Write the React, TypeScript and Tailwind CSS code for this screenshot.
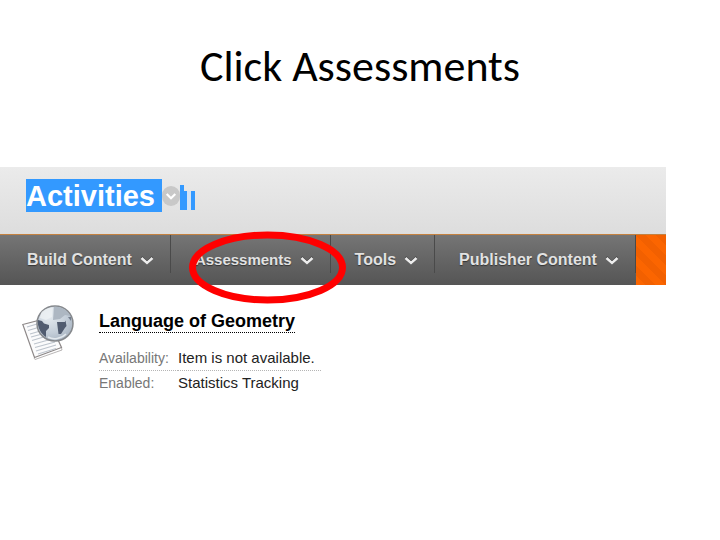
const menus = [
  { name: 'Build Content', size: 'text-base' },
  { name: 'Assessments', size: 'text-[15px]' },
  { name: 'Tools', size: 'text-base' },
  { name: 'Publisher Content', size: 'text-base' },
]

const details = [
  { label: 'Availability:', value: 'Item is not available.' },
  { label: 'Enabled:', value: 'Statistics Tracking' },
]

function Chevron() {
  return (
    <svg viewBox="0 0 14 12" className="h-3 w-[14px] shrink-0" fill="none" aria-hidden="true">
      <path d="M1.5 3 L7 8 L12.5 3" stroke="#3d3d3d" strokeWidth="2" />
      <path d="M1.5 4 L7 9 L12.5 4" stroke="#ededed" strokeWidth="2.4" />
    </svg>
  )
}

// Hand-drawn style ring around the Assessments menu
function Ring() {
  return (
    <svg
      viewBox="0 0 158 73"
      className="pointer-events-none absolute -top-1 left-[18px] z-10 h-[73px] w-[158px]"
      fill="none"
      aria-hidden="true"
    >
      <ellipse cx="78.5" cy="36.5" rx="75" ry="32.5" stroke="#ff0000" strokeWidth="7" />
    </svg>
  )
}

function GlobeIcon() {
  return (
    <svg viewBox="0 0 54 56" className="h-14 w-[54px] shrink-0" fill="none" aria-hidden="true">
      <defs>
        <radialGradient id="globe" cx="0.35" cy="0.3" r="0.8">
          <stop offset="0" stopColor="#e4eaef" />
          <stop offset="0.6" stopColor="#c3cdd8" />
          <stop offset="1" stopColor="#a3afbd" />
        </radialGradient>
      </defs>
      <path d="M0.8 19.5 L26 13 L39.5 42.5 L12.5 52.5 Z" fill="#fbfbfc" stroke="#8d8888" strokeWidth="1.2" />
      <path d="M39.5 43 L40 45 L13 54.5 L12 53" stroke="#b9b6b6" strokeWidth="1" />
      <path
        d="M5 22 L15 19 M6 25.5 L18 22 M8 29 L20 25.5 M9 32 L22 28.5 M10 35.5 L25 31 M12 39 L30 34 M13 42.5 L33 37 M14 46 L34 40 M16 49 L34 43.5"
        stroke="#bdc4cd"
        strokeWidth="1.2"
      />
      <ellipse cx="33" cy="18.5" rx="18" ry="17.5" fill="url(#globe)" stroke="#85888c" strokeWidth="1.5" />
      <path d="M32 2 C40 1 46 6 48.5 11 L43 10 L38 14 L31 15 Z" fill="#adb7c2" />
      <path d="M19 8 C22 4 27 2.5 31 2.5 L30 12 L24 15 L18 13 Z" fill="#eef1f4" opacity="0.8" />
      <path d="M16 15 L20 16 L22 18.5 L27 20 L27 23 L24 26 L24 32 C19 29 15 22 16 15 Z" fill="#515c70" />
      <path d="M35 17 L43 17 L43.5 22 L39 29 L36.5 29 Z M42 19 L43.5 15.5 L44.5 21 L42 24 Z" fill="#515c70" />
      <path d="M46 12 L49 12 L49 16 Z" fill="#737d8c" />
      <path d="M26 32 C31 35 39 34 44 29" stroke="#e2e8ed" strokeWidth="1.5" />
    </svg>
  )
}

export default function App() {
  return (
    <main className="min-h-screen bg-white pb-12 font-['Liberation_Sans',Arial,sans-serif]">
      <h1 className="pt-[38px] text-center font-['Carlito','Lato',sans-serif] text-[44px] leading-[56px] text-black">
        Click Assessments
      </h1>

      <section className="mt-[73px] mr-[54px]">
        <header className="flex h-[67px] items-start bg-linear-to-b from-[#ebebeb] to-[#dddddd] pt-3 pl-[26px]">
          <h2 className="h-[33px] w-[136px] bg-[#3399ff] text-[29px] leading-[34px] font-bold text-white">
            Activities
          </h2>
          <button
            type="button"
            aria-label="Activities options"
            className="mt-[7px] flex h-5 w-[18px] items-center justify-center rounded-full bg-[#c8c8c8]"
          >
            <svg viewBox="0 0 14 10" className="h-[9px] w-3" fill="none" aria-hidden="true">
              <path d="M2 2 L7 7 L12 2" stroke="#fff" strokeWidth="2.5" />
            </svg>
          </button>
          <svg viewBox="0 0 15 25" className="mt-[6px] h-[25px] w-[15px]" aria-hidden="true">
            <path d="M0 0 H4 V6 H15 V25 H0 Z" fill="#d3e3f5" />
            <path d="M0 0 H4 V6 H7 V25 H0 Z M11 6 H15 V25 H11 Z" fill="#3399ff" />
          </svg>
        </header>

        <nav className="flex h-[51px] border-t border-[#c4813f] bg-linear-to-b from-[#757575] to-[#555555] pl-[3px]">
          {menus.map(({ name, size }) => (
            <div key={name} className="relative flex">
              <button
                type="button"
                className={`flex items-center gap-2 pr-4 pl-6 font-bold whitespace-nowrap text-[#e2e2e2] text-shadow-[0_1px_1px_#333] ${size}`}
              >
                {name}
                <Chevron />
              </button>
              <span className="h-[38px] w-px bg-[#4a4a4a]" />
              {name === 'Assessments' && <Ring />}
            </div>
          ))}
          <div className="flex-1 bg-[repeating-linear-gradient(45deg,#fb6500_0px,#fb6500_7px,#f26000_7px,#f26000_14px)]" />
        </nav>

        <article className="flex gap-[23px] pt-5 pl-[22px]">
          <GlobeIcon />
          <div className="pt-[5px]">
            <h3 className="text-lg leading-[22px] font-bold text-black">
              <a href="#geometry" className="inline-block border-b border-dotted border-black">
                Language of Geometry
              </a>
            </h3>
            <table className="mt-[13px] text-[15px] leading-6 text-[#222]">
              <tbody>
                {details.map(({ label, value }) => (
                  <tr key={label} className="border-b border-dotted border-[#b5b5b5] last:border-0">
                    <th scope="row" className="w-[79px] p-0 text-left text-sm leading-6 font-normal text-[#777]">
                      {label}
                    </th>
                    <td className="p-0 pr-[6px]">{value}</td>
                  </tr>
                ))}
              </tbody>
            </table>
          </div>
        </article>
      </section>
    </main>
  )
}
